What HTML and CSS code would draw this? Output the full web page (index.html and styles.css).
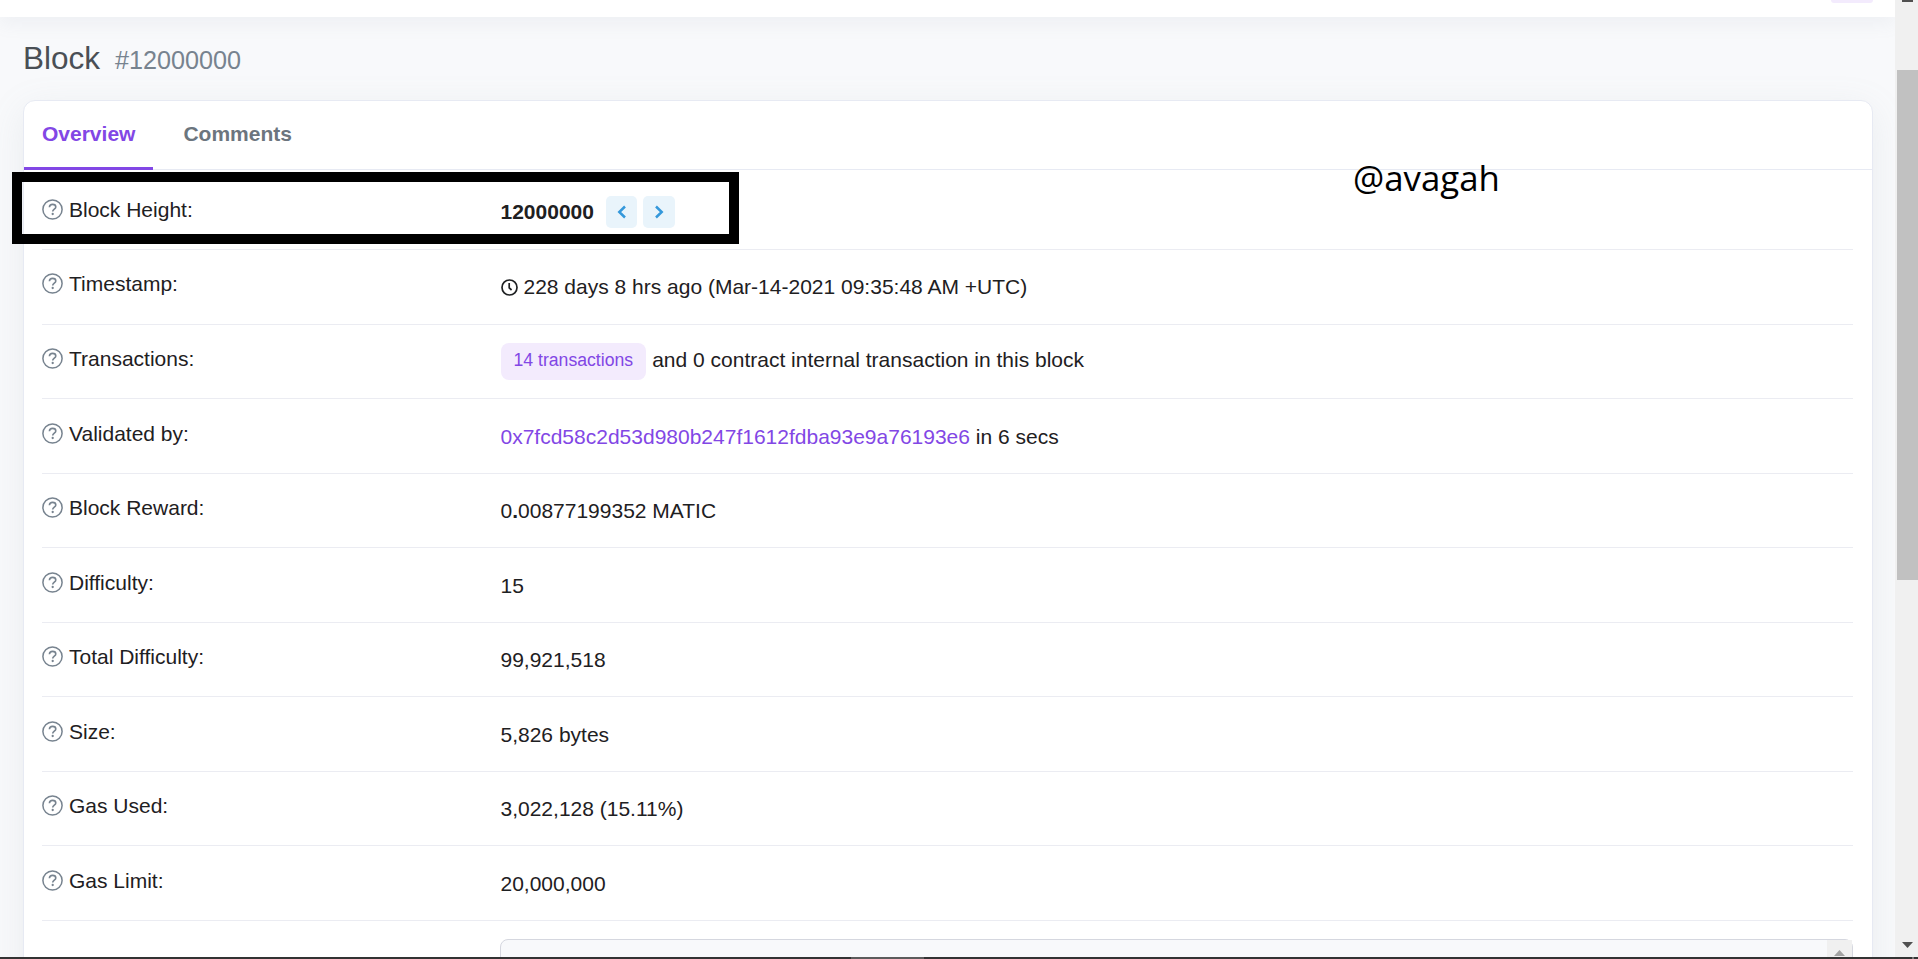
FILE: index.html
```html
<!DOCTYPE html>
<html lang="en">

<head>
    <meta charset="UTF-8">
    <meta name="viewport" content="width=device-width, initial-scale=1.0">
    <title>Block #12000000</title>
    <link rel="stylesheet" href="styles.css">
</head>

<body>
    <svg class="sprite">
        <symbol id="help" viewBox="0 0 21 21">
            <circle cx="10.5" cy="10.5" r="9.6" fill="none" stroke="currentColor" stroke-width="1.5"/>
            <path d="M7.4 8.2 C7.5 6.3 8.8 5.4 10.6 5.4 C12.4 5.4 13.8 6.3 13.8 8 C13.8 10.2 10.7 10.2 10.7 12.6" fill="none" stroke="currentColor" stroke-width="1.6"/>
            <circle cx="10.7" cy="15" r="1.15" fill="currentColor"/>
        </symbol>
    </svg>

    <div id="page">
        <header id="header"><span class="header-btn"></span></header>

        <main id="content">
            <h1>Block <span>#12000000</span></h1>

            <div class="card">
                <nav class="tabs">
                    <a class="active" href="#overview">Overview</a>
                    <a href="#comments">Comments</a>
                </nav>

                <div class="rows" id="overview">
                    <div class="row row-first">
                        <div class="label"><svg class="help"><use href="#help"/></svg>Block Height:</div>
                        <div class="value">
                            <b>12000000</b>
                            <a class="step" href="#prev"><svg viewBox="0 0 10 14"><path d="M8 1.5 L2.3 7 L8 12.5"/></svg></a>
                            <a class="step step-next" href="#next"><svg viewBox="0 0 10 14"><path d="M2 1.5 L7.7 7 L2 12.5"/></svg></a>
                        </div>
                    </div>
                    <div class="row">
                        <div class="label"><svg class="help"><use href="#help"/></svg>Timestamp:</div>
                        <div class="value">
                            <svg class="clock" viewBox="0 0 17 17"><circle cx="8.5" cy="8.5" r="7.5"/><path d="M8.2 4 V8.8 L10.6 11"/></svg>
                            228 days 8 hrs ago (Mar-14-2021 09:35:48 AM +UTC)
                        </div>
                    </div>
                    <div class="row">
                        <div class="label"><svg class="help"><use href="#help"/></svg>Transactions:</div>
                        <div class="value value-badge"><a class="badge" href="#txs">14 transactions</a> and 0 contract internal transaction in this block</div>
                    </div>
                    <div class="row">
                        <div class="label"><svg class="help"><use href="#help"/></svg>Validated by:</div>
                        <div class="value"><p><a href="#address">0x7fcd58c2d53d980b247f1612fdba93e9a76193e6</a> in 6 secs</p></div>
                    </div>
                    <div class="row">
                        <div class="label"><svg class="help"><use href="#help"/></svg>Block Reward:</div>
                        <div class="value"><p>0<b>.</b>00877199352 MATIC</p></div>
                    </div>
                    <div class="row">
                        <div class="label"><svg class="help"><use href="#help"/></svg>Difficulty:</div>
                        <div class="value">15</div>
                    </div>
                    <div class="row">
                        <div class="label"><svg class="help"><use href="#help"/></svg>Total Difficulty:</div>
                        <div class="value">99,921,518</div>
                    </div>
                    <div class="row">
                        <div class="label"><svg class="help"><use href="#help"/></svg>Size:</div>
                        <div class="value">5,826 bytes</div>
                    </div>
                    <div class="row">
                        <div class="label"><svg class="help"><use href="#help"/></svg>Gas Used:</div>
                        <div class="value">3,022,128 (15.11%)</div>
                    </div>
                    <div class="row">
                        <div class="label"><svg class="help"><use href="#help"/></svg>Gas Limit:</div>
                        <div class="value">20,000,000</div>
                    </div>
                    <div class="row row-extra">
                        <div class="extra-data"><div class="extra-scroll"><i class="arrow-up"></i></div></div>
                    </div>
                </div>
            </div>
        </main>

        <aside class="scrollbar">
            <i class="cap"></i>
            <div class="thumb"></div>
            <i class="arrow-down"></i>
        </aside>
    </div>

    <!-- annotations on top of the page -->
    <div class="highlight"></div>
    <div class="handle">@avagah</div>
    <div class="taskbar"><span class="task"></span><span class="tray"></span></div>
</body>

</html>
```

FILE: styles.css
```css
* {
    box-sizing: border-box;
}

body {
    margin: 0;
    height: 959px;
    overflow: hidden;
    font-family: Arial, "Liberation Sans", sans-serif;
    font-size: 21px;
    line-height: 31px;
    color: #1e2022;
    background-color: #f8f9fb;
}

a {
    color: #8247e5;
    text-decoration: none;
}

p {
    margin: 0;
}

.sprite {
    display: none;
}

#page {
    display: grid;
    grid-template-columns: 1fr 23px;
    grid-template-rows: 17px 942px;
    height: 959px;
    overflow: hidden;
}

#header {
    display: flex;
    justify-content: flex-end;
    position: relative;
    z-index: 1;
    padding-right: 22px;
    background-color: #fff;
    box-shadow: 0 6px 18px rgba(140, 152, 164, 0.1);
}

.header-btn {
    width: 42px;
    height: 3px;
    border-radius: 0 0 7px 7px;
    background-color: #f3ebfd;
}

#content {
    padding: 0 22px 0 23px;
    overflow: hidden;
    grid-row: 2;
}

h1 {
    display: flex;
    align-items: baseline;
    gap: 15px;
    margin: 0;
    height: 83px;
    padding-top: 18px;
    font-size: 31.5px;
    line-height: 47px;
    font-weight: 400;
    color: #4a4f55;
}

h1 span {
    font-size: 25.2px;
    color: #77838f;
}

/* card */
.card {
    height: 1000px;
    border: 1px solid #e7eaf3;
    border-radius: 12px;
    background-color: #fff;
    box-shadow: 0 9px 36px rgba(140, 152, 164, 0.13);
}

.tabs {
    display: flex;
    height: 69px;
    border-bottom: 1px solid #e7eaf3;
}

.tabs a {
    height: 69px;
    padding: 17px 18px 0;
    margin-right: 12px;
    font-weight: 700;
    color: #6c757e;
}

.tabs .active {
    color: #8247e5;
    border-bottom: 3px solid #8247e5;
}

.rows {
    padding: 0 19px 0 18px;
}

.row {
    display: grid;
    grid-template-columns: 458.5px 1fr;
    height: 74.55px;
    border-bottom: 1px solid #ebecf2;
}

.row-first {
    height: 80px;
}

.label {
    display: flex;
    height: 31px;
    margin-top: 18.45px;
}

.row-first .label {
    margin-top: 24px;
}

.help {
    width: 21px;
    height: 21px;
    margin: 5px 6px 0 0;
    color: #77838f;
}

.value {
    display: flex;
    align-items: center;
    height: 31px;
    margin-top: 21.45px;
}

.row-first .value {
    margin-top: 26px;
}

.step {
    display: flex;
    align-items: center;
    justify-content: center;
    width: 31px;
    height: 32px;
    margin-left: 12.5px;
    border-radius: 5px;
    background-color: #e9f4fb;
}

.step-next {
    width: 32px;
    margin-left: 6px;
}

.step svg {
    width: 10px;
    height: 14px;
    fill: none;
    stroke: #3498db;
    stroke-width: 2.5;
}

.clock {
    width: 17px;
    height: 17px;
    margin: 2px 6px 0 0;
    fill: none;
    stroke: #1e2022;
    stroke-width: 1.7;
}

.value-badge {
    height: 37px;
    margin-top: 18.4px;
    line-height: 33px;
    align-items: flex-start;
}

.badge {
    height: 37px;
    margin-right: 6px;
    padding: 0 13px;
    border-radius: 8px;
    font-size: 17.65px;
    line-height: 35px;
    background-color: #f3ebfd;
}

.row-extra {
    display: block;
    padding: 18px 0 0 458px;
    height: 90px;
}

.extra-data {
    display: flex;
    justify-content: flex-end;
    height: 72px;
    border: 1px solid #d5d7df;
    border-radius: 8px;
    background-color: #f8f9fb;
}

.extra-scroll {
    width: 25px;
    padding: 10px 0 0 7px;
    background-color: #f0f0f0;
}

.arrow-up {
    display: block;
    width: 11px;
    height: 6px;
    background-color: #a3a3a3;
    clip-path: polygon(50% 0, 100% 100%, 0 100%);
}

/* browser scrollbar */
.scrollbar {
    display: flex;
    flex-direction: column;
    grid-column: 2;
    grid-row: 1 / 3;
    position: relative;
    z-index: 2;
    background-color: #f0f0f0;
}

.cap {
    width: 11px;
    height: 2px;
    margin-left: 7px;
    background-color: #505050;
}

.thumb {
    height: 510px;
    margin: 68px 0 0 2px;
    background-color: #c1c1c1;
}

.arrow-down {
    width: 11px;
    height: 6px;
    margin: auto 0 11px 7px;
    background-color: #505050;
    clip-path: polygon(0 0, 100% 0, 50% 100%);
}

/* annotations */
.highlight {
    position: absolute;
    left: 12px;
    top: 172px;
    width: 727px;
    height: 72px;
    border: 10px solid #000;
}

.handle {
    position: absolute;
    left: 1353px;
    top: 154px;
    font-family: "Segoe UI", "Open Sans", sans-serif;
    font-size: 34.8px;
    line-height: 48px;
    color: #000;
}

.taskbar {
    display: flex;
    position: absolute;
    z-index: 3;
    left: 0;
    top: 957px;
    width: 100%;
    height: 2px;
    background-color: #333;
}

.task {
    width: 73px;
    margin-left: 851px;
    background-color: #5c5c5c;
}

.tray {
    width: 2px;
    margin-left: 988px;
    background-color: #777;
}
```
